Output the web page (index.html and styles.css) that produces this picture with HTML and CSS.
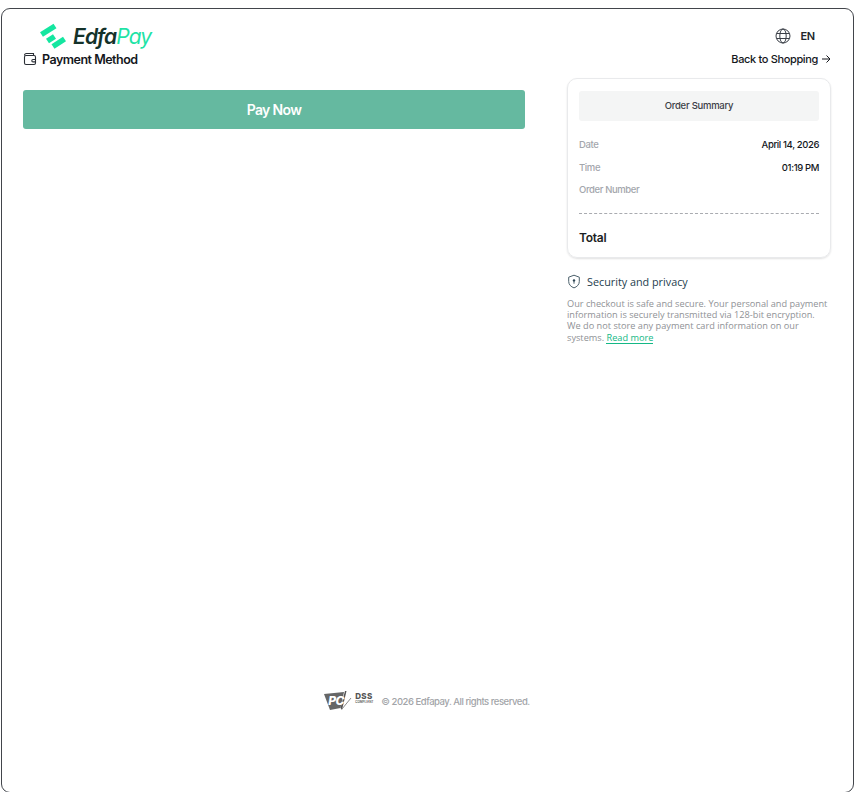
FILE: index.html
```html
<!DOCTYPE html>
<html lang="en">
<head>
    <meta charset="UTF-8">
    <meta name="viewport" content="width=device-width, initial-scale=1.0">
    <title>EdfaPay Checkout</title>
    <link rel="stylesheet" href="styles.css">
</head>
<body>
    <div class="frame">
        <div class="columns">
            <div class="left">
                <div class="logo">
                    <svg class="logo-mark" width="27" height="26" viewBox="0 0 27 26" fill="none" stroke="#14e6a0" stroke-width="5.500">
                        <path d="M2.500 11.500 16 3"/>
                        <path d="M8.500 18 15.500 13.500"/>
                        <path d="M14 23.500 25.500 16"/>
                    </svg>
                    <span class="logo-text"><span class="logo-edfa">Edfa</span><span class="logo-pay">Pay</span></span>
                </div>
                <div class="method-title">
                    <svg width="14" height="14" viewBox="0 0 14 14" fill="none" stroke="#2b2f36" stroke-width="1.100">
                        <path d="M1.500 3.500C1.500 2.300 2.300 1.500 3.500 1.500H10.500V4"/>
                        <rect x="1.500" y="3.500" width="11" height="9" rx="1.500"/>
                        <path d="M12.500 7.500H10a1.200 1.200 0 0 0 0 2.400h2.500"/>
                    </svg>
                    <span>Payment Method</span>
                </div>
                <button class="pay-btn" type="button">Pay Now</button>
            </div>

            <div class="right">
                <div class="lang">
                    <svg width="16" height="16" viewBox="0 0 16 16" fill="none" stroke="#3a3f47" stroke-width="1">
                        <circle cx="8" cy="8" r="7"/>
                        <ellipse cx="8" cy="8" rx="3.200" ry="7"/>
                        <path d="M1.500 5.500h13M1.500 10.500h13"/>
                    </svg>
                    <span>EN</span>
                </div>
                <a class="back-link" href="#">Back to Shopping
                    <svg width="10" height="10" viewBox="0 0 10 10" fill="none" stroke="#14171c" stroke-width="1">
                        <path d="M1 5h8M5.500 1.500 9 5 5.500 8.500"/>
                    </svg>
                </a>

                <div class="summary">
                    <div class="summary-head">Order Summary</div>
                    <div class="summary-row">
                        <span class="row-label">Date</span>
                        <span class="row-value">April 14, 2026</span>
                    </div>
                    <div class="summary-row">
                        <span class="row-label">Time</span>
                        <span class="row-value">01:19 PM</span>
                    </div>
                    <div class="summary-row">
                        <span class="row-label">Order Number</span>
                    </div>
                    <div class="summary-total">Total</div>
                </div>

                <div class="security-title">
                    <svg width="14" height="15" viewBox="0 0 14 15" fill="none" stroke="#4a5f6a" stroke-width="1">
                        <path d="M7 1.200 12.300 3.200V7.500C12.300 10.600 10 12.800 7 13.900 4 12.800 1.700 10.600 1.700 7.500V3.200Z"/>
                        <circle cx="7" cy="6.500" r="1.200" fill="#2c4552" stroke="none"/>
                        <path d="M7 7.300v2.400"/>
                    </svg>
                    <span>Security and privacy</span>
                </div>
                <p class="security-text">Our checkout is safe and secure. Your personal and payment information is securely transmitted via 128-bit encryption. We do not store any payment card information on our systems. <a class="read-more" href="#">Read more</a></p>
            </div>
        </div>

        <div class="footer">
            <div class="pci">
                <svg class="pci-badge" width="28" height="20" viewBox="0 0 28 20">
                    <path d="M0 3 20 1 16.500 17 6 19 3 11Z" fill="#666666"/>
                    <path d="M16.500 17 21 0 22.500 0 18 19Z" fill="#555555"/>
                    <path d="M18 18 27 7" stroke="#8a8a8a" stroke-width="1" fill="none"/>
                </svg>
                <span class="pci-letters">PC</span>
                <span class="pci-dss"><span>DSS</span><small>COMPLIANT</small></span>
            </div>
            <span class="copyright">© 2026 Edfapay. All rights reserved.</span>
        </div>
    </div>
</body>
</html>
```

FILE: styles.css
```css
* {
    box-sizing: border-box;
}
html, body {
    height: 100%;
}
body {
    margin: 0;
    padding: 8px 3px 0 1px;
    font-family: 'Inter', sans-serif;
    background: #ffffff;
    color: #14171c;
    overflow: hidden;
}
.frame {
    height: 785px;
    border: 1px solid #42454b;
    border-radius: 9px;
    padding: 0 22px 0 21px;
    display: flex;
    flex-direction: column;
}
.columns {
    display: flex;
    justify-content: space-between;
    align-items: flex-start;
}
.left {
    width: 502px;
}
.logo {
    display: flex;
    align-items: center;
    margin: 14px 0 0 16px;
    height: 26px;
}
.logo-mark {
    flex: none;
}
.logo-text {
    margin-left: 7px;
    font-size: 21px;
    font-style: italic;
    font-weight: 600;
    letter-spacing: -0.9px;
}
.logo-edfa {
    color: #14322a;
}
.logo-pay {
    color: #1fe3a6;
    font-weight: 400;
}
.method-title {
    display: flex;
    align-items: center;
    gap: 5px;
    margin-top: 1px;
    height: 18px;
    font-size: 12.500px;
    font-weight: 600;
    letter-spacing: -0.5px;
}
.pay-btn {
    display: block;
    width: 100%;
    height: 39px;
    margin-top: 22px;
    border: none;
    border-radius: 3px;
    background: #65b9a0;
    color: #ffffff;
    font-family: inherit;
    font-size: 14px;
    font-weight: 600;
    letter-spacing: -0.65px;
}
.right {
    width: 264px;
}
.lang {
    display: flex;
    justify-content: flex-end;
    align-items: center;
    gap: 9px;
    margin-top: 19px;
    padding-right: 16px;
    height: 16px;
    font-size: 11px;
    font-weight: 600;
    letter-spacing: -0.2px;
    color: #22262c;
}
.back-link {
    display: flex;
    justify-content: flex-end;
    align-items: center;
    gap: 3px;
    margin-top: 7px;
    height: 15px;
    font-size: 11px;
    font-weight: 500;
    letter-spacing: -0.35px;
    color: #14171c;
    text-decoration: none;
}
.summary {
    margin-top: 12px;
    height: 180px;
    padding: 12px 11px 0 11px;
    border: 1px solid #e9eaec;
    border-radius: 10px;
    box-shadow: 0 1px 2px rgba(0, 0, 0, 0.12);
}
.summary-head {
    height: 30px;
    line-height: 30px;
    text-align: center;
    background: #f4f5f5;
    border-radius: 3px;
    font-size: 9.500px;
    font-weight: 500;
    letter-spacing: -0.25px;
    color: #3c4047;
}
.summary-row {
    display: flex;
    justify-content: space-between;
    align-items: center;
    height: 22.500px;
    font-size: 9.500px;
    letter-spacing: -0.38px;
}
.summary-head + .summary-row {
    margin-top: 12.400px;
}
.row-label {
    font-weight: 500;
    color: #a3a6ac;
}
.row-value {
    font-weight: 500;
    color: #14171c;
}
.summary-total {
    margin-top: 12.600px;
    padding-top: 16px;
    border-top: 1px dashed #a9abb0;
    font-size: 12px;
    font-weight: 600;
    letter-spacing: -0.25px;
    color: #1b1e24;
}
.security-title {
    display: flex;
    align-items: center;
    gap: 6px;
    margin-top: 16px;
    font-family: 'Open Sans', sans-serif;
    font-size: 10.800px;
    color: #1d3d4d;
}
.security-text {
    margin: 9px 0 0;
    padding-right: 2px;
    font-family: 'Open Sans', sans-serif;
    font-size: 9.200px;
    line-height: 11px;
    color: #8f9296;
}
.read-more {
    display: inline-block;
    margin-top: 1px;
    line-height: 11px;
    color: #14b885;
    text-decoration: none;
    border-bottom: 1px solid #14b885;
}
.footer {
    margin-top: auto;
    margin-bottom: 81px;
    display: flex;
    justify-content: center;
    align-items: center;
    gap: 7px;
}
.pci {
    position: relative;
    display: flex;
    align-items: center;
    width: 50px;
    height: 20px;
}
.pci-badge {
    flex: none;
}
.pci-letters {
    position: absolute;
    left: 4px;
    top: 4px;
    font-size: 12px;
    line-height: 12px;
    font-weight: 800;
    font-style: italic;
    color: #ffffff;
    letter-spacing: -0.5px;
}
.pci-dss {
    display: flex;
    flex-direction: column;
    gap: 1px;
    margin-left: 3px;
    margin-top: -5px;
    font-size: 8px;
    line-height: 7px;
    font-weight: 800;
    letter-spacing: 0.3px;
    color: #555555;
}
.pci-dss small {
    font-size: 3px;
    line-height: 3px;
    font-weight: 600;
    letter-spacing: 0;
}
.copyright {
    font-size: 9.500px;
    font-weight: 500;
    letter-spacing: -0.47px;
    color: #a2a4a8;
}
```
